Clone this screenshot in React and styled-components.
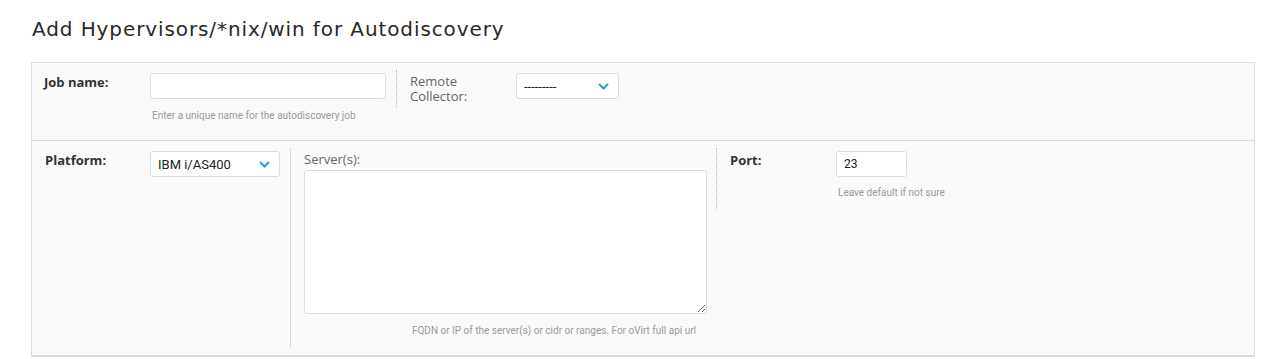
import React from "react";
import styled, { createGlobalStyle } from "styled-components";

const GlobalStyle = createGlobalStyle`
  body {
    margin: 0;
    background: #fff;
    font-family: "Open Sans", sans-serif;
  }
`;

const Page = styled.div`
  padding: 14px 11px 0 31px;
`;

const Title = styled.h1`
  margin: 0 0 18px 1px;
  font-family: "DejaVu Sans", sans-serif;
  font-weight: 400;
  font-size: 20px;
  line-height: 30px;
  letter-spacing: 0.9px;
  color: #2a2a2a;
`;

const Panel = styled.div`
  width: 1222px;
  background: #fafafa;
  border: 1px solid #ddd;
  border-bottom-width: 2px;
`;

const Row = styled.div`
  display: flex;
  align-items: flex-start;
  height: ${(p) => p.h}px;
  & + & {
    border-top: 1px solid #ddd;
  }
`;

const Section = styled.div`
  display: flex;
  align-items: flex-start;
  box-sizing: border-box;
  width: ${(p) => (p.w ? `${p.w}px` : "auto")};
  padding: ${(p) => p.pad || "10px 0 0 12px"};
  ${(p) =>
    p.sep &&
    `
    border-left: 1px dotted #bbb;
    margin-top: 7px;
    height: ${p.sepH}px;
  `}
`;

const Label = styled.div`
  width: ${(p) => p.w || 106}px;
  flex-shrink: 0;
  padding-top: ${(p) => p.top ?? 3}px;
  padding-bottom: ${(p) => p.bottom || 0}px;
  font-size: 13px;
  line-height: ${(p) => (p.light ? 15 : 13)}px;
  font-weight: ${(p) => (p.light ? 400 : 700)};
  color: ${(p) => (p.light ? "#666" : "#333")};
`;

const Control = styled.div`
  display: flex;
  flex-direction: column;
`;

const Input = styled.input`
  box-sizing: border-box;
  width: ${(p) => p.w}px;
  height: 26px;
  margin: 0;
  padding: 0 7px;
  border: 1px solid #ddd;
  border-radius: 3px;
  background: #fff;
  font-family: Roboto, sans-serif;
  font-size: 12px;
  color: #222;
  outline: none;
`;

const Help = styled.div`
  margin: ${(p) => p.m || "11px 0 0 2px"};
  font-family: Roboto, sans-serif;
  font-size: 10px;
  line-height: 12px;
  color: #999;
  text-align: ${(p) => p.align || "left"};
`;

const SelectBox = styled.div`
  box-sizing: border-box;
  width: ${(p) => p.w}px;
  height: ${(p) => p.h || 26}px;
  display: flex;
  align-items: center;
  justify-content: space-between;
  padding: 0 9px 0 7px;
  border: 1px solid #ddd;
  border-radius: 3px;
  background: #fff;
  font-family: Roboto, sans-serif;
  font-size: 13px;
  color: #222;
`;

const TextArea = styled.textarea`
  box-sizing: border-box;
  display: block;
  width: 403px;
  height: 144px;
  margin: 0;
  border: 1px solid #ddd;
  border-radius: 3px;
  background: #fff;
  outline: none;
`;

const Chevron = () => (
  <svg width="11" height="7" viewBox="0 0 11 7">
    <path d="M1 1l4.5 4.5L10 1" fill="none" stroke="#2a9be0" strokeWidth="2" />
  </svg>
);

export default function App() {
  return (
    <>
      <GlobalStyle />
      <Page>
        <Title>Add Hypervisors/*nix/win for Autodiscovery</Title>
        <Panel>
          <Row h={77}>
            <Section w={364} pad="10px 0 0 12px">
              <Label>Job name:</Label>
              <Control>
                <Input w={236} />
                <Help>Enter a unique name for the autodiscovery job</Help>
              </Control>
            </Section>
            <Section sep sepH={38} pad="3px 0 0 13px">
              <Label light w={106} top={1}>
                Remote
                <br />
                Collector:
              </Label>
              <SelectBox w={103} h={26}>
                <span>---------</span>
                <Chevron />
              </SelectBox>
            </Section>
          </Row>
          <Row h={214}>
            <Section w={258} pad="10px 0 0 13px">
              <Label w={105}>Platform:</Label>
              <SelectBox w={130} h={26}>
                <span>IBM i/AS400</span>
                <Chevron />
              </SelectBox>
            </Section>
            <Section w={426} sep sepH={199} pad="3px 0 0 13px">
              <Control>
                <Label light top={1} bottom={3}>
                  Server(s):
                </Label>
                <TextArea />
                <Help align="right" m="11px 11px 0 0">
                  FQDN or IP of the server(s) or cidr or ranges. For oVirt full api url
                </Help>
              </Control>
            </Section>
            <Section sep sepH={62} pad="3px 0 0 13px">
              <Label>Port:</Label>
              <Control>
                <Input w={71} defaultValue="23" />
                <Help m="10px 0 0 2px">Leave default if not sure</Help>
              </Control>
            </Section>
          </Row>
        </Panel>
      </Page>
    </>
  );
}
